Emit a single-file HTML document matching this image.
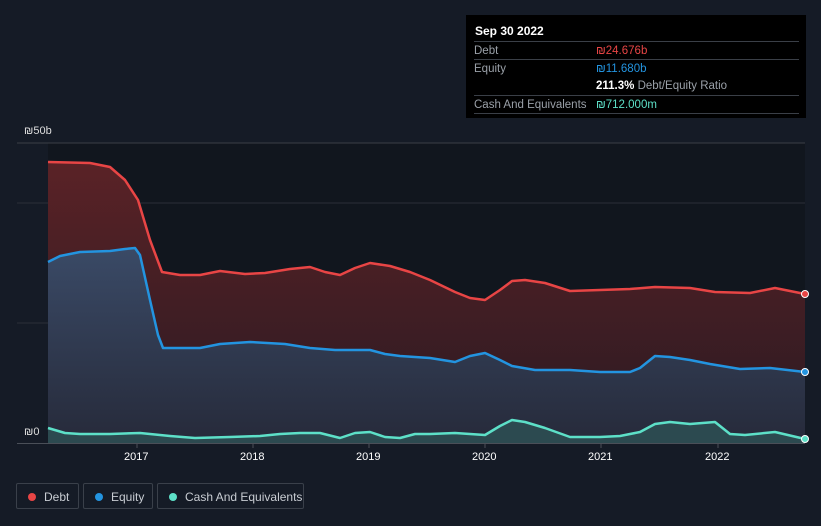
<!DOCTYPE html>
<html><head><style>
body{margin:0;width:821px;height:526px;background:#151b26;font-family:"Liberation Sans",sans-serif;overflow:hidden;position:relative}
.tt{position:absolute;left:466px;top:15px;width:340px;height:103px;background:#000;}
.tt .t{position:absolute;left:9px;top:9px;color:#fff;font-size:12px;font-weight:bold}
.row{position:absolute;left:8px;width:325px;height:18px;border-top:1px solid #3a3f47;font-size:11.5px;color:#9aa0a8;line-height:18px}
.row span{position:absolute;left:122px}
.lg{position:absolute;top:483px;height:26px;border:1px solid #3a404a;border-radius:2px;color:#c8ccd2;font-size:12px;line-height:26px;box-sizing:border-box}
.lg i{position:absolute;left:11px;top:9px;width:8px;height:8px;border-radius:50%}
.lg b{font-weight:normal;position:absolute;left:27px}
.ax{position:absolute;color:#fff;font-size:11px}
</style></head><body>
<svg width="821" height="526" style="position:absolute;left:0;top:0">
<defs>
<linearGradient id="dg" x1="0" y1="0" x2="0" y2="1"><stop offset="0" stop-color="#5a2226"/><stop offset="1" stop-color="#2a1a22"/></linearGradient>
<linearGradient id="eg" x1="0" y1="0" x2="0" y2="1"><stop offset="0" stop-color="#3a4a66"/><stop offset="1" stop-color="#262a3a"/></linearGradient>
</defs>
<rect x="48" y="143" width="757" height="300" fill="#11161e"/>
<line x1="17" y1="143" x2="805" y2="143" stroke="#3a3f47"/>
<line x1="17" y1="203" x2="805" y2="203" stroke="#2a2f38"/>
<line x1="17" y1="323" x2="805" y2="323" stroke="#2a2f38"/>
<path d="M48,162 L90,163 L110,167 L125,180 L138,200 L150,240 L162,272 L180,275 L200,275 L220,271 L245,274 L265,273 L290,269 L310,267 L325,272 L340,275 L355,268 L370,263 L390,266 L410,272 L430,280 L455,292 L470,298 L485,300 L500,290 L512,281 L525,280 L545,283 L570,291 L600,290 L630,289 L655,287 L690,288 L715,292 L750,293 L775,288 L805,294 L805,443 L48,443Z" fill="url(#dg)"/>
<path d="M48,262 L60,256 L80,252 L110,251 L125,249 L135,248 L140,255 L150,300 L158,335 L163,348 L200,348 L220,344 L250,342 L285,344 L310,348 L335,350 L370,350 L385,354 L400,356 L430,358 L455,362 L470,356 L485,353 L500,360 L512,366 L535,370 L570,370 L600,372 L630,372 L640,368 L655,356 L670,357 L690,360 L710,364 L740,369 L770,368 L805,372 L805,443 L48,443Z" fill="url(#eg)"/>
<path d="M48,428 L65,433 L80,434 L110,434 L140,433 L170,436 L195,438 L230,437 L260,436 L280,434 L300,433 L320,433 L340,438 L355,433 L370,432 L385,437 L400,438 L415,434 L430,434 L455,433 L470,434 L485,435 L500,426 L512,420 L525,422 L545,428 L570,437 L600,437 L620,436 L640,432 L655,424 L670,422 L690,424 L715,422 L730,434 L745,435 L775,432 L805,439 L805,443 L48,443Z" fill="#2c4a50"/>
<g fill="none" stroke-width="2.5" stroke-linejoin="round">
<path d="M48,162 L90,163 L110,167 L125,180 L138,200 L150,240 L162,272 L180,275 L200,275 L220,271 L245,274 L265,273 L290,269 L310,267 L325,272 L340,275 L355,268 L370,263 L390,266 L410,272 L430,280 L455,292 L470,298 L485,300 L500,290 L512,281 L525,280 L545,283 L570,291 L600,290 L630,289 L655,287 L690,288 L715,292 L750,293 L775,288 L805,294" stroke="#e84545"/>
<path d="M48,262 L60,256 L80,252 L110,251 L125,249 L135,248 L140,255 L150,300 L158,335 L163,348 L200,348 L220,344 L250,342 L285,344 L310,348 L335,350 L370,350 L385,354 L400,356 L430,358 L455,362 L470,356 L485,353 L500,360 L512,366 L535,370 L570,370 L600,372 L630,372 L640,368 L655,356 L670,357 L690,360 L710,364 L740,369 L770,368 L805,372" stroke="#2394e0"/>
<path d="M48,428 L65,433 L80,434 L110,434 L140,433 L170,436 L195,438 L230,437 L260,436 L280,434 L300,433 L320,433 L340,438 L355,433 L370,432 L385,437 L400,438 L415,434 L430,434 L455,433 L470,434 L485,435 L500,426 L512,420 L525,422 L545,428 L570,437 L600,437 L620,436 L640,432 L655,424 L670,422 L690,424 L715,422 L730,434 L745,435 L775,432 L805,439" stroke="#5de0c8"/>
</g>
<line x1="17" y1="443.5" x2="805" y2="443.5" stroke="#4a4f58"/>
<g stroke="#4a4f58"><line x1="137" y1="443" x2="137" y2="448"/><line x1="253" y1="443" x2="253" y2="448"/><line x1="369" y1="443" x2="369" y2="448"/><line x1="485" y1="443" x2="485" y2="448"/><line x1="601" y1="443" x2="601" y2="448"/><line x1="718" y1="443" x2="718" y2="448"/></g>
<circle cx="805" cy="294" r="3.5" fill="#e84545" stroke="#fff" stroke-width="1"/>
<circle cx="805" cy="372" r="3.5" fill="#2394e0" stroke="#fff" stroke-width="1"/>
<circle cx="805" cy="439" r="3.5" fill="#5de0c8" stroke="#fff" stroke-width="1"/>
</svg>
<div class="ax" style="left:24px;top:125px;color:#ddd">₪50b</div>
<div class="ax" style="left:24px;top:426px;color:#ddd">₪0</div>
<div class="ax" style="left:124px;top:451px">2017</div>
<div class="ax" style="left:240px;top:451px">2018</div>
<div class="ax" style="left:356px;top:451px">2019</div>
<div class="ax" style="left:472px;top:451px">2020</div>
<div class="ax" style="left:588px;top:451px">2021</div>
<div class="ax" style="left:705px;top:451px">2022</div>
<div class="tt">
<div class="t">Sep 30 2022</div>
<div class="row" style="top:26px">Debt<span style="color:#e84545">₪24.676b</span></div>
<div class="row" style="top:44px">Equity<span style="color:#2394e0">₪11.680b</span></div>
<div class="row" style="top:62px;border-top:none"><span><b style="color:#fff">211.3%</b> Debt/Equity Ratio</span></div>
<div class="row" style="top:80px">Cash And Equivalents<span style="color:#5de0c8">₪712.000m</span></div>
<div class="row" style="top:98px;height:0"></div>
</div>
<div class="lg" style="left:16px;width:63px"><i style="background:#e84545"></i><b>Debt</b></div>
<div class="lg" style="left:83px;width:70px"><i style="background:#2394e0"></i><b>Equity</b></div>
<div class="lg" style="left:157px;width:147px"><i style="background:#5de0c8"></i><b>Cash And Equivalents</b></div>
</body></html>
